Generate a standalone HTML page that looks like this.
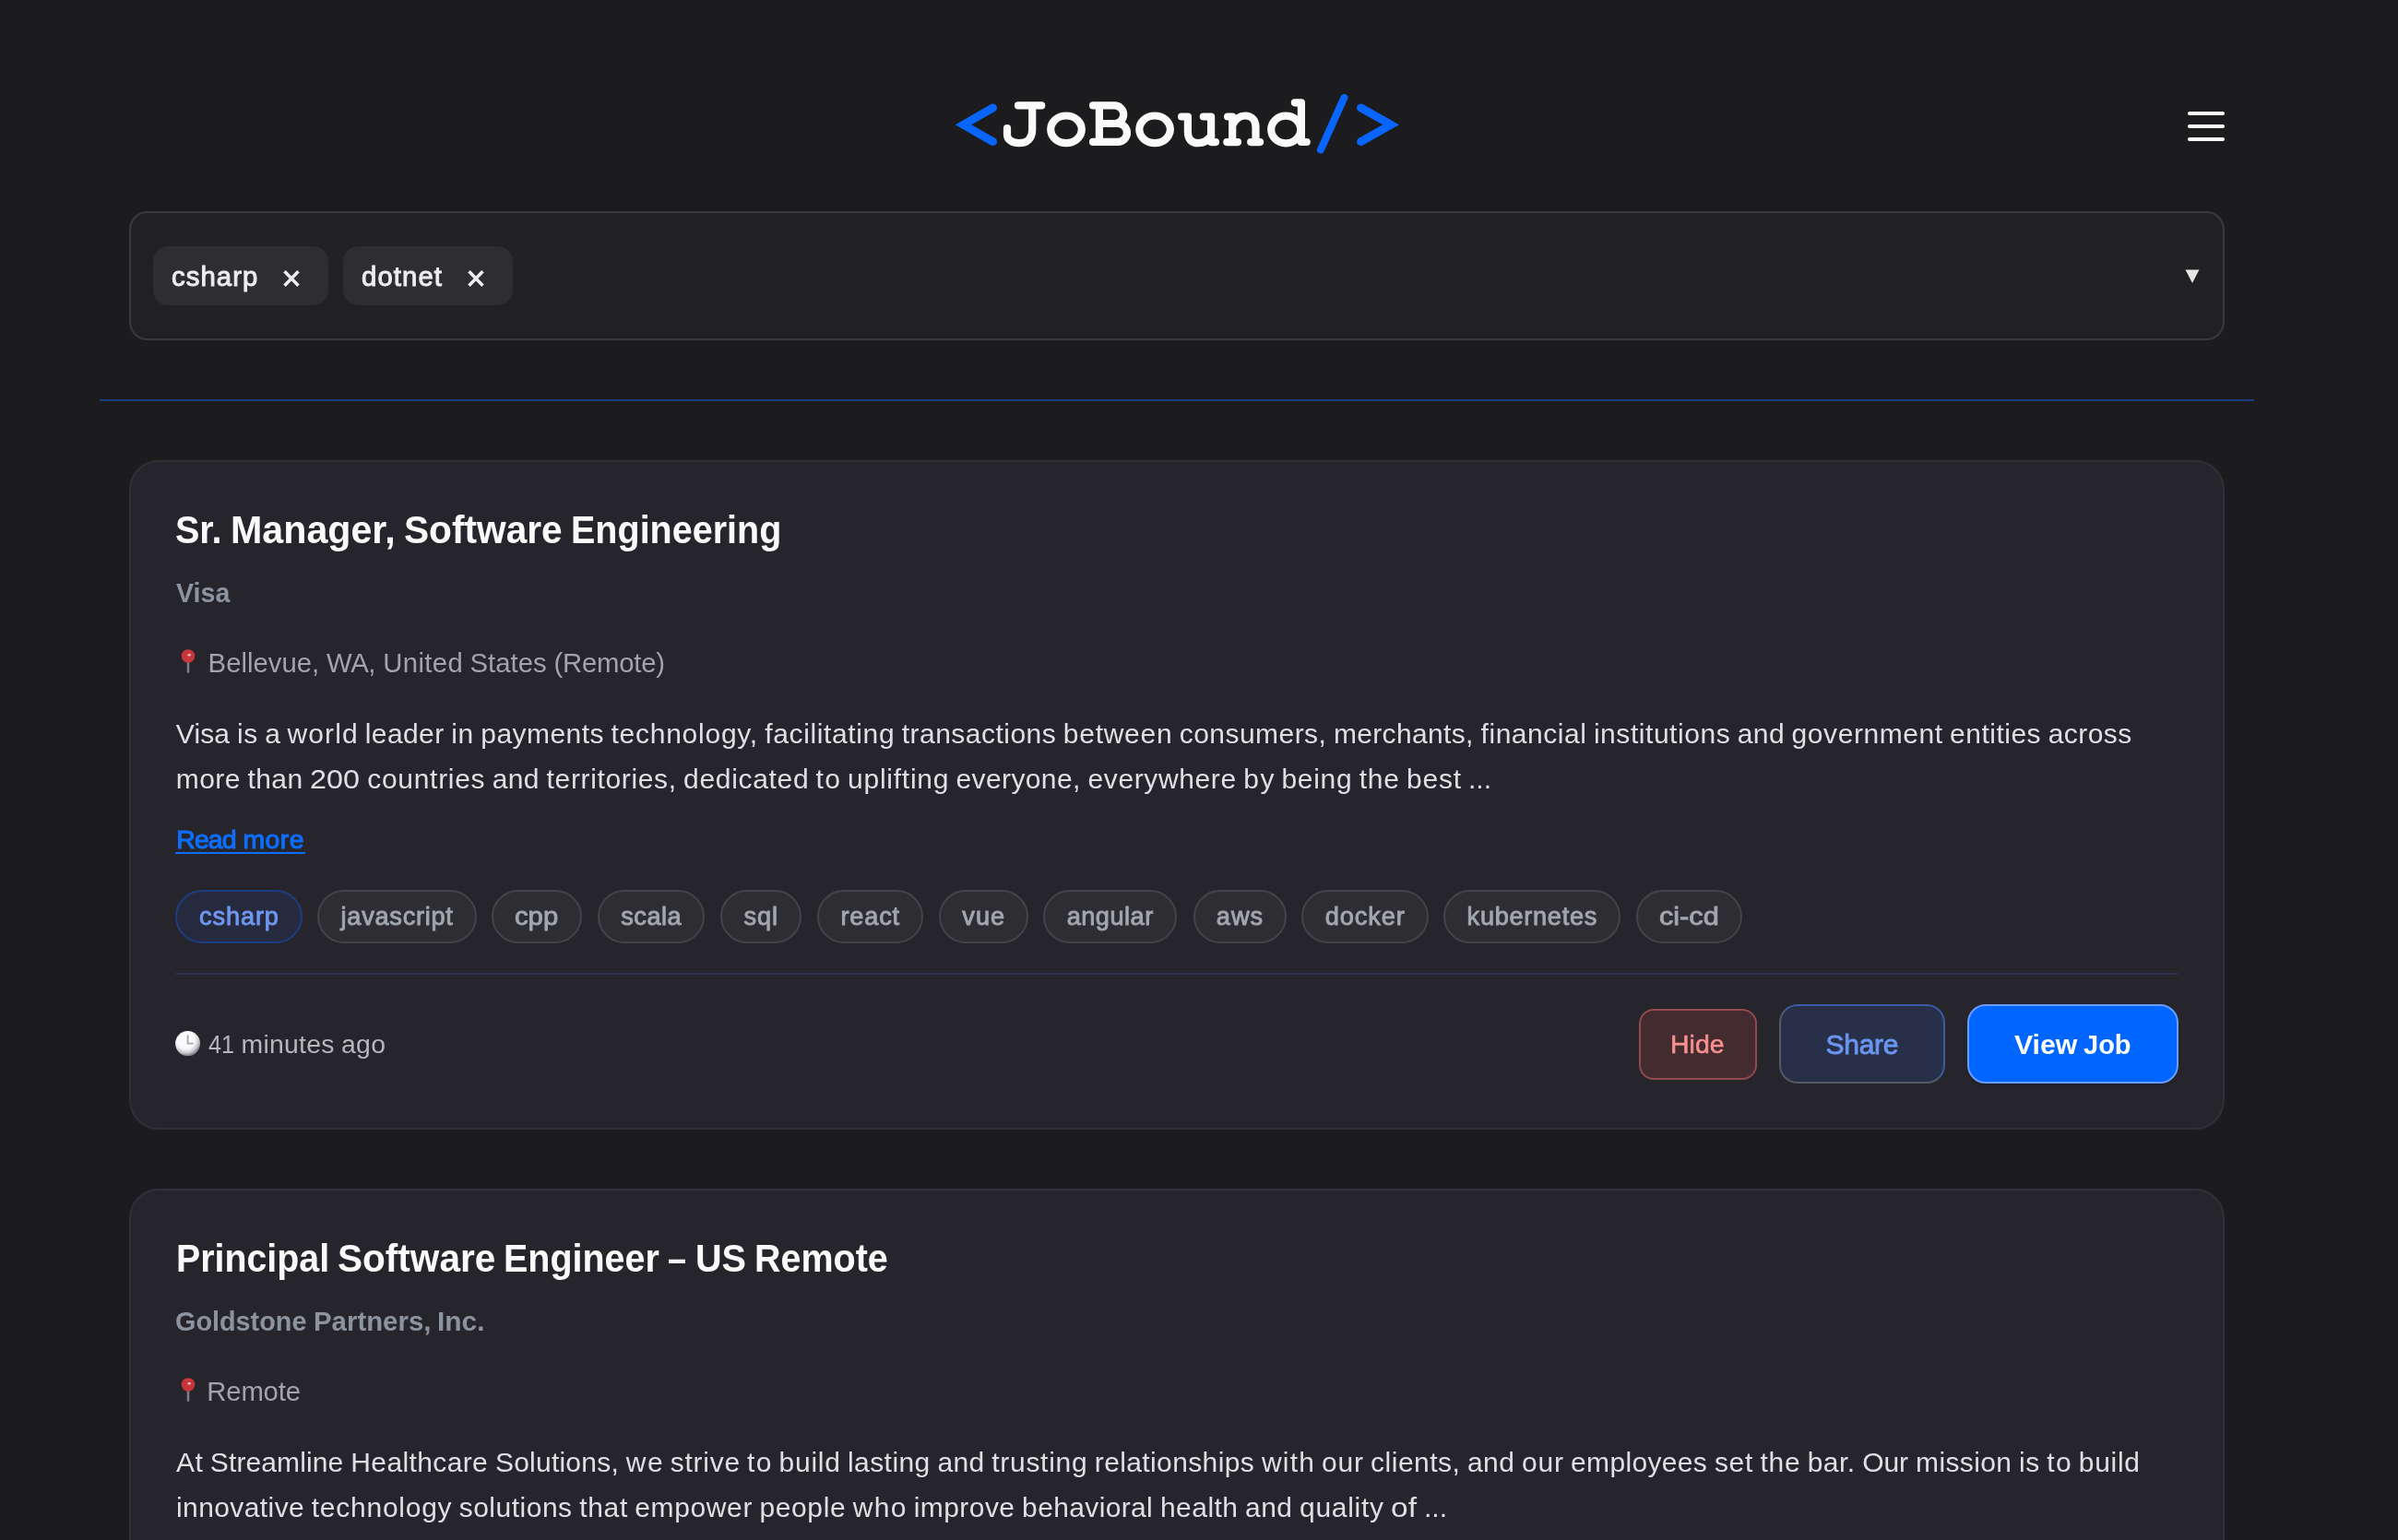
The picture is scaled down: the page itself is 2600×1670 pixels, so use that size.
<!DOCTYPE html>
<html lang="en">
<head>
<meta charset="utf-8">
<title>JoBound</title>
<style>
*{box-sizing:border-box;margin:0;padding:0}
header,section,main,article{display:block;position:static}
html,body{width:2600px;height:1670px;overflow:hidden;background:#1c1c1f}
body{font-family:"Liberation Sans",sans-serif;color:#e4e4e7;position:relative}
.page{position:absolute;left:0;top:0;width:2600px;height:1670px;will-change:transform}
.abs{position:absolute}
.t{position:absolute;white-space:nowrap;line-height:1;height:1em}
.w{position:absolute;top:0;transform-origin:0 50%;display:block}
svg{position:absolute;overflow:visible}
.burger i{position:absolute;left:0;width:40px;height:4px;border-radius:2px;background:#fff}
.filter{left:140px;top:229px;width:2272px;height:140px;border:2px solid #3a3a3e;border-radius:20px;background:#212123}
.chip{top:267px;height:64px;border-radius:16px;background:#2e2e31}
.lbl{color:#ececef;-webkit-text-stroke:1px #ececef}
.hr{left:108px;top:433px;width:2336px;height:2px;background:#1b3d80}
.card{left:140px;width:2272px;border:2px solid #303138;border-radius:32px;background:#26252b}
.title{font-weight:bold;color:#fafafa}
.company{font-weight:bold;color:#8d939e}
.loc{color:#a3a3aa}
.desc{color:#e0e0e4}
.more{color:#0d6efd;-webkit-text-stroke:1.1px #0d6efd}
.ul{left:190px;top:924px;width:141px;height:2px;background:#0d6efd}
.tag{top:965px;height:58px;border:2px solid #434348;border-radius:29px;background:#2d2d32}
.tag.on{background:#252a3e;border-color:#1d3d82}
.tagt{color:#a2a6ad;-webkit-text-stroke:0.9px #a2a6ad}
.tagt.on{color:#6f96ee;-webkit-text-stroke:0.9px #6f96ee}
.div{left:190px;top:1055px;width:2172px;height:2px;background:#2b3250}
.ago{color:#b6b6bb}
.hide{left:1777px;top:1094px;width:128px;height:77px;border:2px solid #94494f;border-radius:16px;background:#432b30}
.share{left:1929px;top:1089px;width:180px;height:86px;border:2px solid;border-color:#3b5ba5 #3b5ba5 #555a68 #555a68;border-radius:20px;background:#283049}
.view{left:2133px;top:1089px;width:229px;height:86px;border:2px solid #6a9cff;border-radius:20px;background:#0066ff;box-shadow:0 3px 3px rgba(0,0,0,.12)}
.hidet{color:#f7908f;-webkit-text-stroke:0.6px #f7908f}
.sharet{color:#6a95f0;-webkit-text-stroke:0.9px #6a95f0}
.viewt{color:#fdfdfd;font-weight:bold}
</style>
</head>
<body>
<div class="page">
<header>
<!-- logo -->
<svg style="left:1020px;top:90px" width="520" height="90" viewBox="1020 90 520 90" role="img" aria-label="&lt;JoBound/&gt;">
<g fill="none" stroke="#0866ff" stroke-linecap="round" stroke-linejoin="miter" stroke-miterlimit="10">
<path stroke-width="8.8" d="M1076.6 116.9 L1044.6 135.25 L1076.6 153.6"/>
<path stroke-width="8" d="M1457.4 105.8 L1432 162.3"/>
<path stroke-width="8.8" d="M1475.5 116.9 L1508 135.25 L1475.5 153.6"/>
</g>
<g fill="none" stroke="#fafafa" stroke-width="8.2" stroke-linecap="round" stroke-linejoin="round">
<path d="M1104 114.4 H1129.2 M1119.2 114.4 V141 C1119.2 150 1113.5 155.2 1105 155.2 C1097.5 155.2 1092 151.5 1092 146 V139"/>
<ellipse cx="1156" cy="140.35" rx="16.8" ry="14.85"/>
<path d="M1185.1 114.4 H1208.4 A9.8 9.8 0 0 1 1208.4 134 H1191.9 M1208.4 134 H1212 A9.95 9.95 0 0 1 1212 153.9 H1185.1 M1191.9 114.4 V153.9"/>
<ellipse cx="1252.1" cy="140.35" rx="16.8" ry="14.85"/>
<path d="M1281.1 126.5 H1287.9 V143 C1287.9 151 1292 155.2 1299 155.2 C1305 155.2 1310 152 1313.1 147 M1304.8 126.5 H1313.1 V154.1 H1318"/>
<path d="M1331.1 126.5 H1336.2 V154.1 M1330.3 154.1 H1342 M1336.2 136 C1339 130 1344 125.5 1350 125.5 C1357.5 125.5 1361.5 130.5 1361.5 138 V154.1 M1356.2 154.1 H1366.1"/>
<ellipse cx="1394.2" cy="140.5" rx="16" ry="14.8"/>
<path d="M1403.9 111.3 H1410.9 V154 H1416.7"/>
</g>
</svg>
<div class="abs burger" style="left:2372px;top:121px;width:40px;height:32px"><i style="top:0"></i><i style="top:14px"></i><i style="top:28px"></i></div>
</header>
<!-- filter -->
<section>
<div class="abs filter"></div>
<div class="abs chip" style="left:166px;width:190px"></div>
<div class="abs chip" style="left:372px;width:184px"></div>
<div class="t lbl" style="left:186.0px;top:285.2px;font-size:29.3px"><span class="w" style="left:0.0px;letter-spacing:1.09px">csharp</span></div>
<div class="t lbl" style="left:392.0px;top:285.2px;font-size:29.3px"><span class="w" style="left:0.0px;letter-spacing:1.11px">dotnet</span></div>
<svg style="left:305.55px;top:291.9px" width="20" height="20" viewBox="-10 -10 20 20"><path d="M-7.5 -7.7 L7.5 7.7 M7.5 -7.7 L-7.5 7.7" stroke="#ededef" stroke-width="3.5" stroke-linecap="butt"/></svg>
<svg style="left:505.55px;top:291.9px" width="20" height="20" viewBox="-10 -10 20 20"><path d="M-7.5 -7.7 L7.5 7.7 M7.5 -7.7 L-7.5 7.7" stroke="#ededef" stroke-width="3.5" stroke-linecap="butt"/></svg>
<svg style="left:2369px;top:292px" width="16" height="15" viewBox="0 0 16 15"><path d="M0.5 0.5 L15.5 0.5 L8 15 Z" fill="#e6e6e6"/></svg>
</section>
<div class="abs hr"></div>
<main>
<!-- card 1 -->
<article>
<div class="abs card" style="top:499px;height:726px"></div>
<div class="t title" style="left:190.0px;top:554.4px;font-size:42px"><span class="w" style="left:0.0px;transform:scaleX(0.9412)">Sr.</span> <span class="w" style="left:59.8px;transform:scaleX(0.9808)">Manager,</span> <span class="w" style="left:247.7px;transform:scaleX(0.9678)">Software</span> <span class="w" style="left:428.7px;transform:scaleX(0.9408)">Engineering</span></div>
<div class="t company" style="left:191.0px;top:627.6px;font-size:30px"><span class="w" style="left:0.0px;transform:scaleX(0.9531)">Visa</span></div>
<svg style="left:193px;top:703px" width="22" height="28" viewBox="0 0 22 28"><path d="M11 14 L11 25.8" stroke="#7d7d84" stroke-width="2.6" stroke-linecap="round"/><circle cx="11" cy="8.5" r="7.3" fill="#c8363c"/><ellipse cx="12.2" cy="7.3" rx="1.8" ry="1.2" fill="#f3b9bb"/></svg>
<div class="t loc" style="left:225.6px;top:704.2px;font-size:29.3px"><span class="w" style="left:0.0px;letter-spacing:0.01px">Bellevue,</span> <span class="w" style="left:128.5px;letter-spacing:-0.43px">WA,</span> <span class="w" style="left:189.7px;letter-spacing:0.36px">United</span> <span class="w" style="left:284.0px;letter-spacing:-0.02px">States</span> <span class="w" style="left:374.9px;letter-spacing:-0.22px">(Remote)</span></div>
<div class="t desc" style="left:190.8px;top:780.6px;font-size:30px"><span class="w" style="left:0.0px;letter-spacing:0.12px">Visa</span> <span class="w" style="left:66.2px;letter-spacing:0.51px">is</span> <span class="w" style="left:96.5px;letter-spacing:0.00px">a</span> <span class="w" style="left:120.7px;letter-spacing:1.12px">world</span> <span class="w" style="left:205.0px;letter-spacing:0.40px">leader</span> <span class="w" style="left:298.4px;letter-spacing:0.62px">in</span> <span class="w" style="left:330.5px;letter-spacing:0.44px">payments</span> <span class="w" style="left:471.7px;letter-spacing:0.75px">technology,</span> <span class="w" style="left:638.4px;letter-spacing:0.64px">facilitating</span> <span class="w" style="left:786.9px;letter-spacing:0.48px">transactions</span> <span class="w" style="left:962.0px;letter-spacing:0.73px">between</span> <span class="w" style="left:1087.9px;letter-spacing:0.46px">consumers,</span> <span class="w" style="left:1255.1px;letter-spacing:0.35px">merchants,</span> <span class="w" style="left:1414.8px;letter-spacing:0.53px">financial</span> <span class="w" style="left:1537.1px;letter-spacing:0.55px">institutions</span> <span class="w" style="left:1693.0px;letter-spacing:0.37px">and</span> <span class="w" style="left:1751.8px;letter-spacing:0.56px">government</span> <span class="w" style="left:1923.3px;letter-spacing:0.49px">entities</span> <span class="w" style="left:2029.9px;letter-spacing:0.45px">across</span></div>
<div class="t desc" style="left:190.8px;top:829.6px;font-size:30px"><span class="w" style="left:0.0px;letter-spacing:0.43px">more</span> <span class="w" style="left:77.7px;letter-spacing:0.41px">than</span> <span class="w" style="left:145.4px;transform:scaleX(1.0769)">200</span> <span class="w" style="left:207.4px;letter-spacing:0.71px">countries</span> <span class="w" style="left:342.9px;letter-spacing:0.38px">and</span> <span class="w" style="left:401.8px;letter-spacing:0.64px">territories,</span> <span class="w" style="left:550.3px;letter-spacing:0.67px">dedicated</span> <span class="w" style="left:693.8px;letter-spacing:1.38px">to</span> <span class="w" style="left:728.3px;letter-spacing:0.74px">uplifting</span> <span class="w" style="left:845.7px;letter-spacing:0.39px">everyone,</span> <span class="w" style="left:988.7px;letter-spacing:0.62px">everywhere</span> <span class="w" style="left:1157.4px;letter-spacing:1.58px">by</span> <span class="w" style="left:1198.7px;letter-spacing:0.67px">being</span> <span class="w" style="left:1282.9px;letter-spacing:0.76px">the</span> <span class="w" style="left:1334.2px;letter-spacing:0.78px">best</span> <span class="w" style="left:1401.3px;letter-spacing:-0.06px">...</span></div>
<div class="t more" style="left:191.3px;top:896.0px;font-size:28.4px"><span class="w" style="left:0.0px;letter-spacing:-0.87px">Read</span> <span class="w" style="left:72.2px;letter-spacing:0.47px">more</span></div>
<div class="abs ul"></div>
<div class="abs tag on" style="left:190px;width:138px"></div><div class="t tagt on" style="left:216.1px;top:980.0px;font-size:27.2px"><span class="w" style="left:0.0px;letter-spacing:0.85px">csharp</span></div>
<div class="abs tag" style="left:344px;width:172.5px"></div><div class="t tagt" style="left:369.6px;top:980.0px;font-size:27.2px"><span class="w" style="left:0.0px;letter-spacing:0.72px">javascript</span></div>
<div class="abs tag" style="left:533px;width:98px"></div><div class="t tagt" style="left:558.4px;top:980.0px;font-size:27.2px"><span class="w" style="left:0.0px;transform:scaleX(1.0756)">cpp</span></div>
<div class="abs tag" style="left:648px;width:116px"></div><div class="t tagt" style="left:673.3px;top:980.0px;font-size:27.2px"><span class="w" style="left:0.0px;letter-spacing:0.47px">scala</span></div>
<div class="abs tag" style="left:780.5px;width:88.5px"></div><div class="t tagt" style="left:806.4px;top:980.0px;font-size:27.2px"><span class="w" style="left:0.0px;letter-spacing:0.94px">sql</span></div>
<div class="abs tag" style="left:885.5px;width:115.5px"></div><div class="t tagt" style="left:911.4px;top:980.0px;font-size:27.2px"><span class="w" style="left:0.0px;letter-spacing:0.82px">react</span></div>
<div class="abs tag" style="left:1017.5px;width:97.5px"></div><div class="t tagt" style="left:1043.3px;top:980.0px;font-size:27.2px"><span class="w" style="left:0.0px;letter-spacing:1.01px">vue</span></div>
<div class="abs tag" style="left:1131px;width:145px"></div><div class="t tagt" style="left:1156.7px;top:980.0px;font-size:27.2px"><span class="w" style="left:0.0px;letter-spacing:0.47px">angular</span></div>
<div class="abs tag" style="left:1293.5px;width:101.0px"></div><div class="t tagt" style="left:1318.8px;top:980.0px;font-size:27.2px"><span class="w" style="left:0.0px;letter-spacing:0.98px">aws</span></div>
<div class="abs tag" style="left:1411px;width:137.5px"></div><div class="t tagt" style="left:1436.7px;top:980.0px;font-size:27.2px"><span class="w" style="left:0.0px;letter-spacing:0.89px">docker</span></div>
<div class="abs tag" style="left:1565px;width:192px"></div><div class="t tagt" style="left:1590.6px;top:980.0px;font-size:27.2px"><span class="w" style="left:0.0px;letter-spacing:0.69px">kubernetes</span></div>
<div class="abs tag" style="left:1773.5px;width:115.5px"></div><div class="t tagt" style="left:1798.9px;top:980.0px;font-size:27.2px"><span class="w" style="left:0.0px;transform:scaleX(1.1266)">ci-cd</span></div>
<div class="abs div"></div>
<svg style="left:190px;top:1118px" width="28" height="28" viewBox="0 0 28 28"><defs><radialGradient id="cg" cx="42%" cy="36%" r="62%"><stop offset="0" stop-color="#ffffff"/><stop offset="0.6" stop-color="#f6f6f8"/><stop offset="0.84" stop-color="#c9c9cd"/><stop offset="1" stop-color="#85858b"/></radialGradient></defs><circle cx="13.6" cy="13.6" r="13.5" fill="url(#cg)"/><path d="M13.6 4.4 L13.6 13.7 L19.6 13.7" fill="none" stroke="#a3a7b3" stroke-width="1.8"/></svg>
<div class="t ago" style="left:226.1px;top:1118.0px;font-size:28.4px"><span class="w" style="left:0.0px;transform:scaleX(0.8865)">41</span> <span class="w" style="left:35.5px;letter-spacing:0.24px">minutes</span> <span class="w" style="left:143.8px;letter-spacing:0.35px">ago</span></div>
<div class="abs hide"></div><div class="abs share"></div><div class="abs view"></div>
<div class="t hidet" style="left:1811.0px;top:1118.0px;font-size:28.4px"><span class="w" style="left:0.0px;letter-spacing:0.04px">Hide</span></div>
<div class="t sharet" style="left:1979.5px;top:1117.6px;font-size:30px"><span class="w" style="left:0.0px;letter-spacing:-0.27px">Share</span></div>
<div class="t viewt" style="left:2184.3px;top:1117.6px;font-size:30px"><span class="w" style="left:0.0px;transform:scaleX(1.0079)">View</span> <span class="w" style="left:75.0px;transform:scaleX(0.9673)">Job</span></div>
</article>
<!-- card 2 -->
<article>
<div class="abs card" style="top:1289px;height:500px"></div>
<div class="t title" style="left:190.5px;top:1344.4px;font-size:42px"><span class="w" style="left:0.0px;transform:scaleX(0.9363)">Principal</span> <span class="w" style="left:175.3px;transform:scaleX(0.9660)">Software</span> <span class="w" style="left:355.8px;transform:scaleX(0.9393)">Engineer</span> <span class="w" style="left:533.8px;transform:scaleX(0.8567)">–</span> <span class="w" style="left:563.0px;transform:scaleX(0.9429)">US</span> <span class="w" style="left:627.3px;transform:scaleX(0.9401)">Remote</span></div>
<div class="t company" style="left:190.0px;top:1417.6px;font-size:30px"><span class="w" style="left:0.0px;transform:scaleX(0.9601)">Goldstone</span> <span class="w" style="left:149.6px;transform:scaleX(0.9795)">Partners,</span> <span class="w" style="left:284.3px;transform:scaleX(0.9972)">Inc.</span></div>
<svg style="left:193px;top:1493px" width="22" height="28" viewBox="0 0 22 28"><path d="M11 14 L11 25.8" stroke="#7d7d84" stroke-width="2.6" stroke-linecap="round"/><circle cx="11" cy="8.5" r="7.3" fill="#c8363c"/><ellipse cx="12.2" cy="7.3" rx="1.8" ry="1.2" fill="#f3b9bb"/></svg>
<div class="t loc" style="left:224.3px;top:1494.2px;font-size:29.3px"><span class="w" style="left:0.0px;letter-spacing:-0.18px">Remote</span></div>
<div class="t desc" style="left:191.0px;top:1570.6px;font-size:30px"><span class="w" style="left:0.0px;letter-spacing:0.37px">At</span> <span class="w" style="left:36.8px;letter-spacing:0.12px">Streamline</span> <span class="w" style="left:189.3px;letter-spacing:0.38px">Healthcare</span> <span class="w" style="left:345.9px;letter-spacing:0.24px">Solutions,</span> <span class="w" style="left:487.8px;letter-spacing:1.49px">we</span> <span class="w" style="left:535.8px;letter-spacing:0.72px">strive</span> <span class="w" style="left:619.1px;letter-spacing:1.38px">to</span> <span class="w" style="left:653.6px;letter-spacing:0.71px">build</span> <span class="w" style="left:727.9px;letter-spacing:0.45px">lasting</span> <span class="w" style="left:825.4px;letter-spacing:0.38px">and</span> <span class="w" style="left:884.2px;letter-spacing:0.73px">trusting</span> <span class="w" style="left:995.8px;letter-spacing:0.38px">relationships</span> <span class="w" style="left:1176.9px;letter-spacing:1.21px">with</span> <span class="w" style="left:1241.9px;letter-spacing:0.89px">our</span> <span class="w" style="left:1295.1px;letter-spacing:0.49px">clients,</span> <span class="w" style="left:1400.0px;letter-spacing:0.38px">and</span> <span class="w" style="left:1458.9px;letter-spacing:0.89px">our</span> <span class="w" style="left:1512.1px;letter-spacing:0.32px">employees</span> <span class="w" style="left:1667.9px;letter-spacing:0.69px">set</span> <span class="w" style="left:1717.4px;letter-spacing:0.76px">the</span> <span class="w" style="left:1768.7px;letter-spacing:0.46px">bar.</span> <span class="w" style="left:1828.2px;letter-spacing:-0.07px">Our</span> <span class="w" style="left:1886.1px;letter-spacing:0.36px">mission</span> <span class="w" style="left:1998.0px;letter-spacing:0.52px">is</span> <span class="w" style="left:2028.3px;letter-spacing:1.38px">to</span> <span class="w" style="left:2062.8px;letter-spacing:0.71px">build</span></div>
<div class="t desc" style="left:191.0px;top:1619.6px;font-size:30px"><span class="w" style="left:0.0px;letter-spacing:0.41px">innovative</span> <span class="w" style="left:146.8px;letter-spacing:0.74px">technology</span> <span class="w" style="left:306.7px;letter-spacing:0.50px">solutions</span> <span class="w" style="left:437.2px;letter-spacing:0.67px">that</span> <span class="w" style="left:497.3px;letter-spacing:0.62px">empower</span> <span class="w" style="left:632.5px;letter-spacing:0.60px">people</span> <span class="w" style="left:733.7px;letter-spacing:1.41px">who</span> <span class="w" style="left:799.7px;letter-spacing:0.44px">improve</span> <span class="w" style="left:917.1px;letter-spacing:0.36px">behavioral</span> <span class="w" style="left:1066.9px;letter-spacing:0.48px">health</span> <span class="w" style="left:1159.1px;letter-spacing:0.39px">and</span> <span class="w" style="left:1218.0px;letter-spacing:0.71px">quality</span> <span class="w" style="left:1317.1px;transform:scaleX(1.1166)">of</span> <span class="w" style="left:1353.1px;letter-spacing:-0.06px">...</span></div>
</article>
</main>
</div>
<script>(function(){var w=window.innerWidth;if(w&&Math.abs(w-2600)>4){document.documentElement.style.zoom=w/2600;}})();</script>
</body>
</html>
